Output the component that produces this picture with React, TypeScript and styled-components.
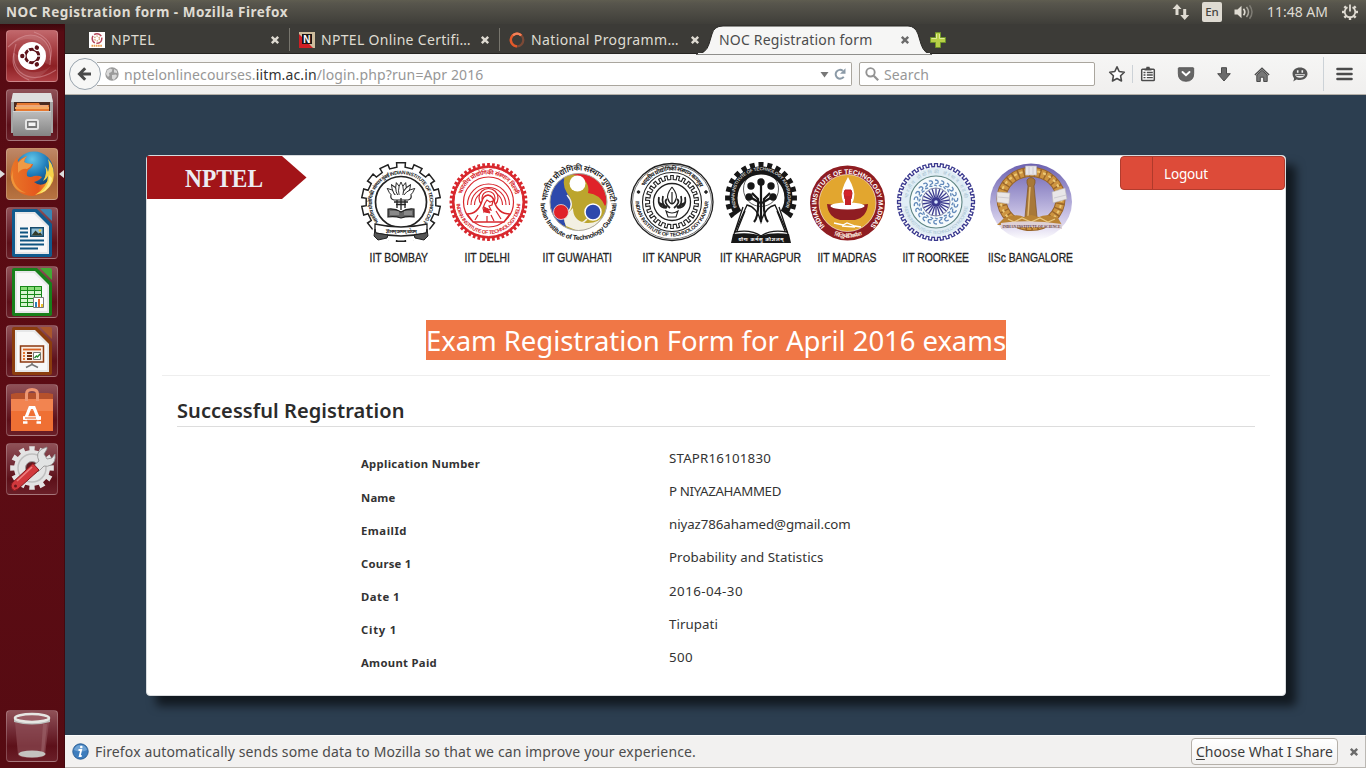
import React, { useLayoutEffect, useRef, useState } from "react";
import styled, { createGlobalStyle } from "styled-components";

const Global = createGlobalStyle`
  * { box-sizing: border-box; }
  html, body { margin: 0; padding: 0; }
  body { font-family: "Noto Sans", "Open Sans", sans-serif; font-size: 14px; overflow: hidden; }
  svg { display: block; flex: none; overflow: visible; }
`;

/* ---------- text tracked to a given measure ---------- */
const Span = styled.span<{ $track: number }>`
  display: inline-block;
  flex: none;
  white-space: nowrap;
  letter-spacing: ${(p) => p.$track}px;
`;

function Fit({ w, text, children }: { w: number; text: string; children?: React.ReactNode }) {
  const ref = useRef<HTMLSpanElement>(null);
  const [track, setTrack] = useState(0);
  useLayoutEffect(() => {
    if (ref.current) setTrack((w - ref.current.getBoundingClientRect().width) / text.length);
  }, []);
  return (
    <Span ref={ref} $track={track}>
      {children ?? text}
    </Span>
  );
}

/* ---------- shell ---------- */
const Desktop = styled.div`
  width: 1366px;
  height: 768px;
  display: flex;
  flex-direction: column;
  overflow: hidden;
`;
const TopPanel = styled.header`
  height: 24px;
  flex: none;
  display: flex;
  align-items: center;
  padding: 0 8px 0 6px;
  background: linear-gradient(#5f5d50 0, #58564d 3px, #3f3e39 100%);
  color: #dfdbd2;
`;
const WindowTitle = styled.div`
  flex: 1;
  font-weight: 700;
  font-size: 13.5px;
  line-height: 22px;
`;
const Indicators = styled.div`
  display: flex;
  align-items: center;
  height: 24px;
  line-height: 24px;
`;
const Gap = styled.span<{ $w: number }>`
  width: ${(p) => p.$w}px;
  flex: none;
`;
const LangBadge = styled.span`
  width: 20px;
  height: 20px;
  border-radius: 2px;
  background: #dfdbd2;
  color: #45433e;
  font-size: 11.5px;
  font-weight: 500;
  line-height: 20px;
  text-align: center;
`;
const Body = styled.div`
  flex: 1;
  display: flex;
  min-height: 0;
`;
const Launcher = styled.nav`
  width: 65px;
  flex: none;
  display: flex;
  flex-direction: column;
  gap: 7px;
  padding: 6px 0 6px 6px;
  background: linear-gradient(#3d070c 0, #570b13 8px, #5c0c14 60%, #560b12 100%);
  border-right: 1px solid #43090f;
`;
const Tile = styled.div<{ $tone?: string; $last?: boolean }>`
  position: relative;
  width: 52px;
  height: 52px;
  flex: none;
  margin-top: ${(p) => (p.$last ? "auto" : "0")};
  border-radius: 4px;
  border: 1px solid rgba(255, 255, 255, 0.22);
  background: ${(p) =>
    p.$tone ?? "linear-gradient(#8f5157 0, #75303a 35%, #5d1019 70%, #6a1f28 100%)"};
  svg { margin: -1px; }
`;
const Marker = styled.i<{ $right?: boolean }>`
  position: absolute;
  top: 21px;
  left: ${(p) => (p.$right ? "52px" : "-7px")};
  border: 4px solid transparent;
  ${(p) => (p.$right ? "border-right: 5px solid #ddd; border-left: 0;" : "border-left: 5px solid #ddd; border-right: 0;")}
`;

/* ---------- browser ---------- */
const Browser = styled.main`
  flex: 1;
  min-width: 0;
  display: flex;
  flex-direction: column;
`;
const TabStrip = styled.div`
  height: 30px;
  flex: none;
  display: flex;
  padding-left: 15px;
  background: #3c3b37;
  border-bottom: 1px solid #262522;
`;
const Tab = styled.div<{ $active?: boolean; $line?: boolean }>`
  position: relative;
  width: 210px;
  flex: none;
  display: flex;
  align-items: center;
  padding: 2px 10px 0 9px;
  line-height: 20px;
  color: ${(p) => (p.$active ? "#4c4c4c" : "#dfdbd2")};
  &::after {
    content: "";
    position: absolute;
    right: 0;
    top: 4px;
    width: 1px;
    height: 23px;
    background: ${(p) => (p.$line ? "#77756d" : "transparent")};
  }
`;
const TabShape = styled.svg`
  position: absolute;
  left: -14px;
  top: 1px;
`;
const TabLabel = styled.div`
  position: relative;
  flex: 1;
  display: flex;
  align-items: center;
  gap: 6px;
`;
const CloseWrap = styled.span`
  position: relative;
  flex: none;
`;
const Toolbar = styled.div`
  height: 41px;
  flex: none;
  display: flex;
  align-items: center;
  padding: 0 13px 0 4px;
  background: linear-gradient(#f6f6f5, #f0efee);
  border-bottom: 1px solid #b3afa8;
`;
const BackButton = styled.button`
  position: relative;
  width: 32px;
  height: 32px;
  flex: none;
  padding: 0;
  display: grid;
  place-items: center;
  border: 1px solid #98a3ad;
  border-radius: 50%;
  background: #f7f7f6;
`;
const Field = styled.div<{ $w: number; $joined?: boolean }>`
  width: ${(p) => p.$w}px;
  height: 24px;
  flex: none;
  display: flex;
  align-items: center;
  margin-left: ${(p) => (p.$joined ? "-4px" : "7px")};
  padding: 0 5px;
  padding-left: ${(p) => (p.$joined ? "8px" : "5px")};
  border: 1px solid #aaa69e;
  ${(p) => p.$joined && "border-left: 0;"}
  border-radius: ${(p) => (p.$joined ? "0 2px 2px 0" : "2px")};
  background: #fff;
  color: #979797;
  line-height: 20px;
  ${Span} { padding-top: 2px; }
  b { font-weight: 400; color: #333; }
`;
const Grow = styled.span`
  flex: 1;
`;
const ToolIcons = styled.div`
  flex: 1;
  display: flex;
  align-items: center;
  justify-content: flex-end;
`;
const Divider = styled.span<{ $h: number; $l: number; $r: number }>`
  width: 1px;
  height: ${(p) => p.$h}px;
  margin: 0 ${(p) => p.$r}px 0 ${(p) => p.$l}px;
  background: #ccd2d7;
`;

/* ---------- page ---------- */
const Viewport = styled.section`
  flex: 1;
  min-height: 0;
  padding: 60px 80px 0 81px;
  background: #2c3e50;
  overflow: hidden;
`;
const Card = styled.article`
  height: 541px;
  background: #fff;
  border: 1px solid #d8dbde;
  border-radius: 4px;
  box-shadow: 10px 10px 10px rgba(0, 0, 0, 0.6);
  color: #333;
`;
const CardHead = styled.div`
  display: flex;
  align-items: flex-start;
  height: 164px;
`;
const Logout = styled.button`
  width: 165px;
  height: 34px;
  flex: none;
  display: flex;
  padding: 0;
  margin-left: 34px;
  border: 1px solid #b13c2e;
  border-radius: 4px;
  background: #dd4b39;
  color: #fff;
  font: 13.5px/35px "Noto Sans", sans-serif;
  text-align: left;
`;
const LogoutIconCell = styled.span`
  width: 32px;
  height: 32px;
  margin-right: 11px;
  border-right: 1px solid #b03a2b;
`;
const Title = styled.h1`
  width: 580px;
  height: 40px;
  margin: 0 0 0 279px;
  background: #f07746;
  color: #fff;
  font-weight: 400;
  font-size: 27.5px;
  line-height: 41px;
  white-space: nowrap;
`;
const Rule = styled.hr`
  height: 1px;
  border: 0;
  margin: 15px 15px 0;
  background: #eee;
`;
const Heading = styled.h2`
  height: 51px;
  margin: 0 30px;
  padding-top: 20px;
  border-bottom: 1px solid #ddd;
  font-size: 20px;
  font-weight: 600;
  line-height: 29px;
  color: #2b2b2b;
`;
const Details = styled.dl`
  margin: 15px 0 0 214px;
`;
const Row = styled.div`
  display: grid;
  grid-template-columns: 308px 1fr;
  height: 33.2px;
`;
const Term = styled.dt`
  padding-top: 12.35px;
  font-weight: 700;
  font-size: 11.3px;
  line-height: 20px;
`;
const Value = styled.dd`
  margin: 0;
  padding-top: 5.85px;
  font-size: 13.3px;
  line-height: 20px;
`;
const Notice = styled.footer`
  height: 33px;
  flex: none;
  display: flex;
  align-items: center;
  padding: 0 6px 0 7px;
  background: #f2f1f0;
  border-top: 1px solid #fbfbfb;
  border-bottom: 1px solid #bbb8b3;
  border-right: 1px solid #bbb8b3;
  color: #4c4c4c;
`;
const ShareButton = styled.button`
  width: 147px;
  height: 27px;
  margin-right: 11px;
  padding: 0 0 0 4px;
  border: 1px solid #b5b0a9;
  border-radius: 4px;
  background: linear-gradient(#fff, #f3f2f1);
  color: #3c3c3c;
  font: 14px/24px "Noto Sans", sans-serif;
  text-align: left;
  u { text-underline-offset: 2px; }
`;

/* ---------- drawing helpers ---------- */
function gear(cx: number, cy: number, r1: number, r2: number, n: number, duty = 0.5) {
  const pts: string[] = [];
  const pt = (r: number, a: number) =>
    pts.push(`${(cx + r * Math.cos(a)).toFixed(2)},${(cy + r * Math.sin(a)).toFixed(2)}`);
  const step = (Math.PI * 2) / n;
  for (let i = 0; i < n; i++) {
    const mid = i * step - Math.PI / 2;
    const h = (step * duty) / 2;
    pt(r1, mid - h * 1.05);
    pt(r2, mid - h);
    pt(r2, mid + h);
    pt(r1, mid + h * 1.05);
  }
  return "M" + pts.join("L") + "Z";
}
const arcTop = (cx: number, cy: number, r: number) => `M${cx - r} ${cy}A${r} ${r} 0 0 1 ${cx + r} ${cy}`;
const arcBottom = (cx: number, cy: number, r: number) => `M${cx - r} ${cy}A${r} ${r} 0 0 0 ${cx + r} ${cy}`;
const ring = (n: number) => Array.from({ length: n }, (_, i) => (i * 360) / n);

function ArcText({ id, d, size, len, fill, offset = "50%", children, weight = 700 }: {
  id: string; d: string; size: number; len: number; fill: string; offset?: string; children: string; weight?: number;
}) {
  return (
    <>
      <path id={id} d={d} fill="none" />
      <text fontFamily="Liberation Sans, Noto Sans, sans-serif" fontSize={size} fontWeight={weight} fill={fill} textAnchor="middle">
        <textPath href={`#${id}`} startOffset={offset} textLength={len}>{children}</textPath>
      </text>
    </>
  );
}

const names: [string, number, number][] = [
  ["IIT BOMBAY", 369.5, 58.5], ["IIT DELHI", 464.5, 45.5], ["IIT GUWAHATI", 542.5, 69.5], ["IIT KANPUR", 642.5, 58.5],
  ["IIT KHARAGPUR", 720, 81], ["IIT MADRAS", 817.5, 59], ["IIT ROORKEE", 902.5, 66.5], ["IISc BANGALORE", 988, 85],
];

function Bombay() {
  const k = "#222";
  return (
    <g stroke={k} fill="none">
      <path d={gear(401, 202, 35, 39.5, 14, 0.5)} strokeWidth="1.5" fill="#fff" />
      <circle cx="401" cy="202" r="25.5" strokeWidth="1.7" />
      <path d="M374 226l-6 14 66 0-6-14z" fill="#fff" stroke="none" />
      <g stroke="none">
        <ArcText id="bo" d="M379 222A29 29 0 1 1 423 222" size={5} len={132} fill={k}>भारतीय प्रौद्योगिकी संस्थान मुंबई INDIAN INSTITUTE OF TECHNOLOGY</ArcText>
      </g>
      {[-50, -32, -15, 15, 32, 50, 0].map((a) => (
        <path key={a} transform={`rotate(${a} 401 200)`} d="M401 199q-5-8 0-17q5 9 0 17" strokeWidth=".9" fill="#fff" />
      ))}
      <path d="M391 195q-1 4 3 5h14q4-1 3-5" strokeWidth="1.2" fill="#fff" />
      <path d="M394 202h14M396 204.500h10M401 198v12M397 200v8M405 200v8" strokeWidth="1.300" />
      <path d="M388 209q7-1 13 3q6-4 13-3v8q-7-1-13 1q-6-2-13-1z" fill="#666" strokeWidth="1.200" />
      <path d="M390 212h9M390 214h9M404 212h8M404 214h8" stroke="#ddd" strokeWidth=".6" />
      <path d="M375 224q26 6 52 0v9q-26 6-52 0z" fill="#fff" strokeWidth="1.300" />
      <path d="M375 229l-1 7 4 4 9-2 1-3-12-2zM427 229l1 7-4 4-9-2-1-3 12-2z" fill="#555" />
      <text x="401" y="233" fontSize="5" stroke="none" fill={k} textAnchor="middle" fontWeight="700" textLength="31">ज्ञानम् परमम् ध्येयम्</text>
    </g>
  );
}
function Delhi() {
  const c = "#d8272d";
  return (
    <g fill="none" stroke={c}>
      <path d={gear(488.5, 202, 36.5, 39, 48, 0.55)} fill={c} stroke="none" />
      <circle cx="488.5" cy="202" r="34.5" fill="#fff" strokeWidth="1" />
      <circle cx="488.5" cy="202" r="25" strokeWidth="1.2" />
      {[21, 17.5, 14].map((r) => (
        <path key={r} d={`M${488.5 - r} 205A${r} ${r} 0 1 1 ${488.5 + r} 205`} strokeWidth="1.1" />
      ))}
      <circle cx="488.5" cy="198" r="9.5" fill="#fff" strokeWidth="1.200" />
      <circle cx="488.5" cy="198" r="6.5" strokeWidth="1.200" />
      <path d="M467 214q11 0 15-13q1-5 6-6q5 1 6 6q4 13 16 13l-6 8h-31z" fill="#fff" strokeWidth="1.500" />
      <path d="M485 203l2-3 3 2 3-1-1 4-3 1 2 4-4-1-3 3-1-4zM478 215l-3 5M496 211l5 8M487 216v6M491 215l3 6" strokeWidth="1.200" />
      <path d="M484 207l4 2 2 4-5-1z" fill={c} />
      <g stroke="none">
        <ArcText id="d1" d={arcTop(488.5, 202, 27.7)} size={6} len={72} fill={c}>भारतीय प्रौद्योगिकी संस्थान दिल्ली</ArcText>
        <ArcText id="d2" d={arcBottom(488.5, 202, 32)} size={5.2} len={97} fill={c}>INDIAN INSTITUTE OF TECHNOLOGY DELHI</ArcText>
      </g>
    </g>
  );
}
function Guwahati() {
  return (
    <g>
      <defs><clipPath id="gdisc"><circle cx="578.5" cy="202" r="28.5" /></clipPath></defs>
      <circle cx="578.5" cy="202" r="28.5" fill="#bca52d" />
      <g clipPath="url(#gdisc)">
        <path d="M571 174q22-5 32 14q6 13 2 18q-5-12-17-13q2-9-5-14q-6-4-12-5z" fill="#e02229" />
        <path d="M566 173q-20 9-17 33q4 17 17 21q-4-10 3-16q6-8-2-18q-6-9-1-20z" fill="#2d49ac" />
        <path d="M566 226q-5-10 3-14l4-4q0 13 13 15q12 1 19-9q-12 18-27 17z" fill="#f3f0e2" />
        <path d="M571 224q11 1 16-5M567 195q8 9 1 17" fill="none" stroke="#f3f0e2" strokeWidth="1.500" />
      </g>
      <circle cx="577.500" cy="183.500" r="8" fill="#fff" />
      <circle cx="561" cy="212" r="7.500" fill="#e02229" stroke="#e9dede" strokeWidth=".8" />
      <circle cx="593" cy="212" r="8" fill="#2d49ac" stroke="#fff" strokeWidth="1.500" />
      <circle cx="578.5" cy="202" r="28.5" fill="none" stroke="#a9a6a0" strokeWidth="1" />
      <ArcText id="g1" d={arcTop(578.5, 202, 31.5)} size={8} len={98} fill="#222" weight={600}>भारतीय प्रौद्योगिकी संस्थान गुवाहाटी</ArcText>
      <ArcText id="g2" d={arcBottom(578.5, 202, 38)} size={6.8} len={117} fill="#222">Indian Institute of Technology Guwahati</ArcText>
    </g>
  );
}
function Kanpur() {
  const k = "#222";
  return (
    <g fill="none" stroke={k}>
      <ellipse cx="672" cy="202" rx="41" ry="38.5" strokeWidth="1.3" />
      <ellipse cx="672" cy="202" rx="39.5" ry="37" strokeWidth=".6" />
      <circle cx="672" cy="202" r="29.5" strokeWidth="1.1" />
      <path d={gear(672, 202, 22.5, 26.5, 26, 0.42)} strokeWidth="1.1" />
      <circle cx="672" cy="202" r="18.5" strokeWidth="1.3" />
      <path d="M672 187q-6 8-4 12q1 4 4 5q3-1 4-5q2-4-4-12M672 192v12" strokeWidth="1.200" />
      <path d="M659 197q-2 10 7 11M663 196q-2 9 4 11M667 199q-4 3 3 9M685 197q2 10-7 11M681 196q2 9-4 11M677 199q4 3-3 9M660 203l7 5M684 203l-7 5" strokeWidth="1.700" />
      <path d="M666 211q6 4 12 0l-2 6h-8z" fill="#fff" strokeWidth="1.100" />
      <circle cx="638.500" cy="192" r="1.3" fill={k} /><circle cx="706" cy="192" r="1.3" fill={k} />
      <g stroke="none">
        <ArcText id="k1" d={arcTop(672, 202, 31.5)} size={6} len={68} fill={k}>भारतीय प्रौद्योगिकी संस्थान कानपुर</ArcText>
        <ArcText id="k2" d={arcBottom(672, 200, 36.5)} size={5.3} len={112} fill={k}>INDIAN INSTITUTE OF TECHNOLOGY KANPUR</ArcText>
      </g>
    </g>
  );
}
function Kharagpur() {
  const k = "#171717";
  return (
    <g>
      <path d={gear(761, 198, 31.5, 36, 24, 0.55)} fill={k} />
      <circle cx="761" cy="198" r="23.5" fill="#fff" />
      <ArcText id="kh" d="M740 213A26.500 26.500 0 1 1 782 213" size={4.6} len={104} fill="#ccc">INDIAN INSTITUTE OF TECHNOLOGY KHARAGPUR</ArcText>
      <circle cx="761" cy="189" r="17.500" fill="none" stroke={k} strokeWidth=".7" />
      <path d="M734 216l-9 18h72l-9-18-12-9h-30z" fill="#fff" />
      <path d="M747 205q10 2 14 17q4-15 14-17l12 27q-16-3-26 4q-10-7-26-4z" fill="#fff" stroke={k} strokeWidth="1.300" />
      <path d="M743 207l-9 27M779 207l9 27M745 211l-8 20M777 211l8 20" fill="none" stroke={k} strokeWidth="1.300" />
      <path d="M754 222q5-6 4-23l-6-6M768 222q-5-6-4-23l6-6M761 222v-38M760 203l-10-6M762 203l10-6" stroke={k} strokeWidth="2.200" fill="none" />
      {[[761, 182], [751, 186], [771, 186], [749, 197], [773, 197]].map(([x, y]) => (
        <circle key={`${x}-${y}`} cx={x} cy={y} r="3.7" fill={k} />
      ))}
      <path d="M733 234q18-2 28 2q10-4 28-2l2 9h-60z" fill={k} />
      <text x="761" y="240.5" fontSize="5" fill="#fff" textAnchor="middle" fontWeight="700" textLength="45">योगः कर्मसु कौशलम्</text>
    </g>
  );
}
function Madras() {
  return (
    <g>
      <circle cx="847.5" cy="203" r="37.5" fill="#8f1d22" />
      <circle cx="847.5" cy="203" r="28.5" fill="#e2a62f" stroke="#fff" strokeWidth=".6" />
      <ArcText id="m1" d="M828 229A31 31 0 1 1 867 229" size={6.6} len={144} fill="#fff">INDIAN INSTITUTE OF TECHNOLOGY MADRAS</ArcText>
      <path d="M848 177q-8 14-6 21q1 6 6 7q5-1 6-7q2-7-6-21z" fill="#fff" />
      <path d="M845 190h6l1 3-1 6h-6l-1-6zM847 199v6M849.5 199v6" fill="#d3242a" stroke="#b81d23" />
      <path d="M827 204q20 3 41 0q-1 13-13 16h-15q-12-3-13-16z" fill="#8f1d22" />
      <ellipse cx="847.5" cy="206" rx="17" ry="3.5" fill="#fff" />
      <path d="M845 196h6v9h-6z" fill="#c3232a" />
      <path d="M834 223l9 2 4-2 8 3 6 1M842 226l13 1" stroke="#fff" strokeWidth="1.300" fill="none" />
      <ArcText id="m2" d={arcBottom(847.5, 203, 35)} size={5.5} len={29} fill="#f3dfd0">सिद्धिर्भवति कर्मजा</ArcText>
    </g>
  );
}
function Roorkee() {
  const b = "#3b3a8f";
  return (
    <g fill="none">
      <circle cx="936" cy="202" r="34.5" fill="#e0edf5" />
      <path d={gear(936, 202, 35.5, 38.5, 40, 0.5)} stroke={b} strokeWidth="1.3" />
      <ArcText id="r1" d={arcTop(936, 202, 28.5)} size={5} len={82} fill="#a5bfd0" weight={400}>भारतीय प्रौद्योगिकी संस्थान रुड़की</ArcText>
      <ArcText id="r2" d={arcBottom(936, 202, 32)} size={4.5} len={92} fill="#a5bfd0" weight={400}>INDIAN INSTITUTE OF TECHNOLOGY ROORKEE</ArcText>
      <circle cx="936" cy="202" r="26" fill="#f5fafc" stroke="#5d8481" strokeWidth="1.1" />
      {ring(22).map((a) => (
        <g key={a} transform={`rotate(${a} 936 202)`}>
          <path d="M935 180q4 0 3 3l-3 1M937 186l-3-1" stroke="#6289ba" strokeWidth="1.300" />
          <path d="M936 197v-9" stroke={b} strokeWidth="1.300" />
        </g>
      ))}
      <circle cx="936" cy="202" r="14" stroke="#8287a7" strokeWidth="1" />
      <circle cx="936" cy="202" r="5" fill={b} /><circle cx="936" cy="202" r="1.8" fill="#dce9ff" />
    </g>
  );
}
function Bangalore() {
  return (
    <g>
      <defs>
        <linearGradient id="sky" x1="0" y1="0" x2="0" y2="1">
          <stop offset="0" stopColor="#6c61b0" /><stop offset=".45" stopColor="#a9a2d4" /><stop offset=".8" stopColor="#ddd7ef" /><stop offset="1" stopColor="#fff" />
        </linearGradient>
      </defs>
      <ellipse cx="1031" cy="202" rx="41" ry="38.500" fill="url(#sky)" />
      <ellipse cx="1031" cy="199" rx="29.500" ry="27" fill="none" stroke="#99652a" strokeWidth="10" />
      <ellipse cx="1031" cy="199" rx="29.500" ry="27" fill="none" stroke="#cd9440" strokeWidth="8" strokeDasharray="4 1.500" />
      <ellipse cx="1031" cy="199" rx="30.500" ry="28" fill="none" stroke="#ecc977" strokeWidth="2" strokeDasharray="3 3" />
      <path d="M1025.500 166h11v9h-11zM997 192l13 1-1 11-12-2zM1052 192l13-4 2 11-14 4z" fill="#e9e6e8" stroke="#b8b3b8" strokeWidth=".6" />
      <path d="M998 197l11 1M1054 198l12-3M1029 167v7M1033 167v7" stroke="#c8c4cc" strokeWidth=".8" />
      <path d="M1027 180q4-5 8 0v3l-1 3 3 31h-12l3-31-1-3z" fill="#a87838" stroke="#805421" strokeWidth=".7" />
      <path d="M1030 187l-2 29" stroke="#e1b873" strokeWidth="1.500" />
      <path d="M1004 218q13-5 20-1l7-2 8 2q8-4 19 1l4 7h-65z" fill="#b98334" />
      <path d="M1008 219l6 3 8-4 9 4 9-4 8 4 7-3" stroke="#e8c67d" strokeWidth="1.300" fill="none" />
      <path d="M1001 223q29-4 61 1v5q-31-4-61 0z" fill="#ded0d5" />
      <text x="1031.500" y="228" fontSize="4.500" fill="#5f3d48" textAnchor="middle" fontWeight="700" textLength="58" lengthAdjust="spacingAndGlyphs" fontFamily="Liberation Serif, serif">INDIAN INSTITUTE OF SCIENCE</text>
    </g>
  );
}
function Institutes() {
  return (
    <svg width="726" height="120" viewBox="360 156 726 120" fontFamily="Liberation Sans, Noto Sans, sans-serif">
      <Bombay /><Delhi /><Guwahati /><Kanpur /><Kharagpur /><Madras /><Roorkee /><Bangalore />
      {names.map(([t, x, w]) => (
        <text key={t} x={x} y="261.800" fontSize="13" fill="#222" stroke="#222" strokeWidth=".3" textLength={w} lengthAdjust="spacingAndGlyphs">{t}</text>
      ))}
    </svg>
  );
}
const FlagSlot = styled.div`
  width: 213px;
  flex: none;
`;
function Flag() {
  return (
    <svg width="160" height="43" viewBox="0 0 160 43">
      <path d="M0 0H135L159.500 21.500 135 43H0Z" fill="#a21418" />
      <text x="38" y="30.500" fontFamily="Liberation Serif, serif" fontSize="24.500" fontWeight="700" fill="#ececf2" textLength="78" lengthAdjust="spacingAndGlyphs">NPTEL</text>
    </svg>
  );
}

/* ---------- chrome icons ---------- */
const Close = ({ c }: { c: string }) => (
  <svg width="10" height="10" viewBox="0 0 10 10"><path d="M1.800 1.800l6.400 6.400M8.200 1.800l-6.400 6.400" stroke={c} strokeWidth="2.400" /></svg>
);
const NptelFavicon = () => (
  <svg width="16" height="16" viewBox="0 0 16 16">
    <path fill="#fff" d="M0 0h16v16H0z" /><circle cx="8" cy="6.500" r="4.800" fill="none" stroke="#b5485a" strokeWidth="1.500" strokeDasharray="8 1.500" />
    <circle cx="8" cy="6.500" r="2.400" fill="none" stroke="#d4a275" strokeWidth="1.300" strokeDasharray="1.400 1" /><path d="M2.500 13.800h11" stroke="#e89c4c" strokeWidth="2" strokeDasharray="1.600 .6" />
  </svg>
);
const NFavicon = () => (
  <svg width="16" height="16" viewBox="0 0 16 16">
    <path fill="#cdbc9c" d="M0 0h16v16H0z" /><path fill="#cf1e24" d="M0 2l14 14H0z" /><path fill="#1b1414" d="M3 2h10v10H3z" />
    <text x="7.800" y="11" fill="#fff" fontSize="10" fontWeight="700" textAnchor="middle" fontFamily="Liberation Sans, sans-serif">N</text>
  </svg>
);
const Spinner = () => (
  <svg width="16" height="16" viewBox="0 0 16 16" fill="none" strokeWidth="2.300">
    <circle cx="8" cy="8" r="6.300" stroke="#7b4936" /><path d="M12.500 3.500A6.300 6.300 0 1 0 8 14.300" stroke="#e2592a" />
    <path d="M4 3.300A6.300 6.300 0 0 1 12 3.300" stroke="#f2835c" />
  </svg>
);
const Plus = styled.svg`
  margin: 8px 0 0 10px;
`;
const PLUS = "M5.500 .5h5v5h5v5h-5v5h-5v-5h-5v-5h5z";

const ic = "#4b4b4b";
const Star = () => (
  <svg width="18" height="18" viewBox="0 0 18 18"><path d="M9 1.800l2.200 4.700 5.100.7-3.700 3.600.9 5.200L9 13.500 4.500 16l.9-5.200L1.700 7.200l5.100-.7z" fill="#fff" stroke={ic} strokeWidth="1.600" strokeLinejoin="round" /></svg>
);
const Clipboard = () => (
  <svg width="14" height="16" viewBox="0 0 14 16"><path d="M1.500 3.200h11q.8 0 .8.8v9.700q0 .8-.8.8h-11q-.8 0-.8-.8V4q0-.8.8-.8z" fill="#fff" stroke={ic} strokeWidth="1.500" /><path d="M3.500 4.500V2.700H5L5.500.8h3L9 2.700h1.500v1.800z" fill={ic} /><path d="M2.500 6.500h2M5.800 6.500h6M2.500 9h2M5.800 9h6M2.500 11.600h2M5.800 11.600h6" stroke={ic} strokeWidth="1.400" /></svg>
);
const Pocket = () => (
  <svg width="16" height="15" viewBox="0 0 16 15"><path d="M1 .7h14q.7 0 .7.700v5.200q0 7.700-7.700 7.700T.3 6.600V1.400Q.3.700 1 .700z" fill="#666" stroke={ic} strokeWidth=".8" /><path d="M4.500 5l3.500 3.300L11.500 5" fill="none" stroke="#fff" strokeWidth="1.900" strokeLinecap="round" /></svg>
);
const Download = () => (
  <svg width="14" height="15" viewBox="0 0 14 15"><path d="M4.500.7h5v6h3.800L7 14 .7 6.700h3.800z" fill="#6b6b6b" stroke={ic} strokeWidth="1" /></svg>
);
const Home = () => (
  <svg width="16" height="15" viewBox="0 0 16 15"><path d="M2.800 8L8 3.300l5.200 4.700V14.500H9.700v-4.300H6.300v4.300H2.800z" fill="#777" stroke={ic} /><path d="M.9 8L8 1.300l7.100 6.700" fill="none" stroke={ic} strokeWidth="1.500" /></svg>
);
const Chat = () => (
  <svg width="16" height="15" viewBox="0 0 16 15"><path d="M8 .5c4.200 0 7.500 2.700 7.500 6.300S12.200 13 8 13c-1.300 0-2.400-.2-3.400-.6L1 14.500q1.200-1.500 1-3.200Q.5 9.500.5 6.800C.5 3.200 3.800.5 8 .5z" fill="#555" /><path d="M5.700 3.200v2.500M10.300 3.200v2.500" stroke="#eee" strokeWidth="1.600" /><path d="M3 7.200h10q-1 3.500-5 3.500T3 7.200z" fill="#eee" /><path d="M4.300 8.500h7.400" stroke="#666" /></svg>
);
const Menu = () => (
  <svg width="17" height="14" viewBox="0 0 17 14"><path d="M1.500 2h14M1.500 7h14M1.500 12h14" stroke={ic} strokeWidth="2.600" strokeLinecap="round" /></svg>
);
const BackArrow = () => (
  <svg width="16" height="16" viewBox="0 0 16 16"><path d="M14 8H3.500M8.200 2.300L2.500 8l5.700 5.700" fill="none" stroke="#4a4a4a" strokeWidth="3" /></svg>
);
const Globe = () => (
  <svg width="14" height="14" viewBox="0 0 14 14"><circle cx="7" cy="7" r="6.700" fill="#9b9b9b" /><path d="M2 3.500l3-2 2.500 1-1 2.500-2.500 1 .5 2.500L3 10 1 7zM9 2l3 2v2l-3-.5zM7 8l4-.5 1 1.500-3 4-2-1.500z" fill="#d9d9d9" /></svg>
);
const Reload = () => (
  <svg width="12" height="12" viewBox="0 0 12 12"><path d="M9.700 8.700A4.400 4.400 0 1 1 8.800 2.800" fill="none" stroke="#8b9aa7" strokeWidth="2" /><path d="M11.500.3v5.500H6z" fill="#8b9aa7" /></svg>
);
const Magnifier = () => (
  <svg width="14" height="14" viewBox="0 0 14 14" fill="none" stroke="#939393"><circle cx="5.500" cy="5.300" r="4.200" strokeWidth="1.900" /><path d="M8.700 8.700l4.500 4.600" strokeWidth="2.300" /></svg>
);
const p = "#dfdbd2";
const NetArrows = () => (
  <svg width="18" height="16" viewBox="0 0 18 16"><path d="M5 0l4.500 5H6.500v6h-3V5H.5zM12.700 16l-4.500-5h3V5h3v6h3z" fill={p} /></svg>
);
const Speaker = () => (
  <svg width="20" height="16" viewBox="0 0 20 16"><path d="M.5 5.500h3l4-3.700v12.400l-4-3.700h-3z" fill={p} /><path d="M9.500 4.700q2.600 3.300 0 6.600" stroke={p} strokeWidth="1.700" fill="none" /><path d="M12.500 3q4 5 0 10" stroke="#aaa79e" strokeWidth="1.500" fill="none" /><path d="M15.500 1.200q5 6.800 0 13.600" stroke="#7e7c74" strokeWidth="1.500" fill="none" /></svg>
);
const PowerGear = () => (
  <svg width="16" height="16" viewBox="0 0 16 16">
    {ring(8).slice(1).map((a) => <path key={a} transform={`rotate(${a} 8 8)`} d="M8 0v3" stroke={p} strokeWidth="2.400" />)}
    <path d="M5.500 3.300A5.300 5.300 0 1 0 10.500 3.300" stroke={p} strokeWidth="1.800" fill="none" /><path d="M8 .5v7" stroke={p} strokeWidth="1.800" />
  </svg>
);
const Info = () => (
  <svg width="17" height="17" viewBox="0 0 17 17"><circle cx="8.500" cy="8.500" r="7.700" fill="#3e7dbd" stroke="#2b5f96" /><path d="M2 7a6.700 6.700 0 0 1 13 0q-6 3-13 0" fill="#6ea2d4" /><path d="M6.500 7h2.700l-1.500 6h2" fill="none" stroke="#fff" strokeWidth="1.800" /><circle cx="9.300" cy="4" r="1.300" fill="#fff" /></svg>
);

/* ---------- launcher icons ---------- */
const Dash = () => (
  <svg width="52" height="52" viewBox="0 0 52 52">
    <path d="M2 17Q20-1 35 8q12 8 9 27l-5-2Q42 8 20 9Q10 10 2 17zM23 51Q3 42 8 23l5 3q0 14 12 16q12 1 20-6Q36 48 23 51z" fill="#fff" fillOpacity=".1" />
    <g fill="none" stroke="#e0a0a5" strokeOpacity=".5" strokeWidth="1.100"><path d="M2 17Q20-1 35 8q12 8 9 27" /><path d="M50 40Q28 54 14 42Q4 32 10 14" /><path d="M23 50Q3 42 8 23M28 2q22 8 16 28" /></g>
    <circle cx="26" cy="26" r="14" fill="#fff" />
    <circle cx="26" cy="26" r="6.800" fill="none" stroke="#5c1219" strokeWidth="3" />
    {[60, 180, 300].map((a) => (
      <g key={a} transform={`rotate(${a} 26 26)`}><circle cx="35.700" cy="26" r="3.400" fill="#fff" /><circle cx="35.700" cy="26" r="2.200" fill="#5c1219" /></g>
    ))}
    {[0, 120, 240].map((a) => <path key={a} transform={`rotate(${a} 26 26)`} d="M30 26h5" stroke="#fff" strokeWidth="1.300" />)}
  </svg>
);
const Files = () => (
  <svg width="52" height="52" viewBox="0 0 52 52">
    <defs><linearGradient id="cab" x1="0" y1="0" x2="0" y2="1"><stop offset="0" stopColor="#bdbdbd" /><stop offset="1" stopColor="#848484" /></linearGradient></defs>
    <path d="M7 4h38l2 10v30H5V14z" fill="#a5a5a5" /><path d="M7 4h38l2 9H5z" fill="#dedede" /><path d="M8 13h36v10H8z" fill="#4c2b20" />
    <path d="M11 14h22l1 2h9v8H9z" fill="#e67931" /><path d="M10 17h32" stroke="#fff" strokeOpacity=".7" /><path d="M9 19h34" stroke="#f6ab61" strokeWidth="2" />
    <path d="M7 22h38v24q0 1-1 1H8q-1 0-1-1z" fill="url(#cab)" /><path d="M7 22.500h38" stroke="#d4d4d4" />
    <rect x="20" y="31" width="12" height="9" rx="1.500" fill="#777" stroke="#e5e5e5" strokeWidth="2" /><path d="M22.500 33.500h7v3.500h-7z" fill="#f5f5f5" />
  </svg>
);
const Firefox = () => (
  <svg width="52" height="52" viewBox="0 0 52 52">
    <defs>
      <radialGradient id="fb" cx=".45" cy=".2" r=".8"><stop offset="0" stopColor="#5fc4e8" /><stop offset=".5" stopColor="#1d79b8" /><stop offset="1" stopColor="#10345f" /></radialGradient>
      <linearGradient id="ff" x1="0" x2="1"><stop offset="0" stopColor="#e97628" /><stop offset=".65" stopColor="#e4571d" /><stop offset="1" stopColor="#f7b33c" /></linearGradient>
    </defs>
    <circle cx="28" cy="23" r="19.500" fill="url(#fb)" />
    <path d="M46 19q3 10-2 18q-6 10-18 11Q9 47 5 31Q3 20 11 9l1 5q3-4 9-6q-3 3-3 7q3 1 9 1q-1 4-5 6q-2 3-1 6q3 2 7 0q4-1 8 1q-3 4-8 5q6 5 12 1q6-5 6-16z" fill="url(#ff)" />
    <path d="M42 11q8 9 5 22q-5 12-18 14q13-8 13-19q-2 4-5 5q5-8 2-15q2 2 3 6q2-6 0-13z" fill="#f6d24a" /><path d="M43 27q1 12-9 18q12-4 12-15z" fill="#fbe98c" />
    <path d="M7 22q-2 17 13 23q-14-2-15-16z" fill="#f09439" />
    <path d="M12 15q3-4 9-7q-3 3-3 6q3 2 8 2q-1 3-5 5q-5-1-9 4z" fill="#f09a45" />
  </svg>
);
const DocFrame = ({ c, light, children }: { c: string; light: string; children: React.ReactNode }) => (
  <svg width="52" height="52" viewBox="0 0 52 52">
    <path d="M8 2h23l15 15v31q0 2-2 2H8q-2 0-2-2V4q0-2 2-2z" fill={c} /><path d="M9 5h20l14 14v28H9z" fill="#e6e7e8" /><path d="M11 7h17l13 13v25H11z" fill="#f8f8f8" />
    <path d="M34 2h10q2 0 2 2v10z" fill={light} />{children}
  </svg>
);
const Writer = () => (
  <DocFrame c="#105b8e" light="#3b86b3"><path d="M14 21.500h8M14 25.500h8M14 29.500h8M14 33.500h24M14 37.500h24M14 41.500h18" stroke="#0f5480" strokeWidth="2" /><path d="M24 20h14v10H24z" fill="#174c6c" /><path d="M25.500 21.500h11v7h-11z" fill="#8fbfd7" /><path d="M25.500 28.500l4-5 3 3 2-1 2 3z" fill="#333d2b" /><circle cx="34" cy="23.500" r="1.300" fill="#efc93b" /></DocFrame>
);
const Calc = () => (
  <DocFrame c="#18801a" light="#43a935"><path d="M14 20h22v21H14z" fill="#188819" />{[0, 1, 2].map((x) => [0, 1, 2, 3, 4].map((y) => <path key={`${x}${y}`} d={`M${15 + x * 7} ${21 + y * 4}h6v3h-6z`} fill={y ? "#d8f4d0" : "#8add78"} />))}<path d="M27.500 31.500h10v10h-10z" fill="#fff" stroke="#777" /><path d="M29 36h2v5h-2z" fill="#2980b9" /><path d="M32 33h2v8h-2z" fill="#e0672a" /><path d="M35 38h2v3h-2z" fill="#ecc32b" /></DocFrame>
);
const Impress = () => (
  <DocFrame c="#8b3d0e" light="#a9572c"><path d="M14.500 21h23v16h-23z" fill="#f9ede2" stroke="#8c3910" strokeWidth="1.500" /><path d="M17 24.500h18" stroke="#d76124" strokeWidth="1.800" /><path d="M17 28h2M17 31h2M17 34h2" stroke="#e4762f" strokeWidth="2" /><path d="M21 28h5M21 31h5M21 34h5" stroke="#702e10" strokeWidth="2" /><path d="M27.500 27.500h7v7h-7z" fill="#fff" stroke="#777" /><path d="M28.500 33l2-2 1 1 2.500-3" stroke="#23882d" fill="none" strokeWidth="1.400" /><path d="M26 37.500v2l-6 3M26 39.500l6 3" stroke="#777" fill="none" strokeWidth="1.600" /></DocFrame>
);
const Bag = () => (
  <svg width="52" height="52" viewBox="0 0 52 52">
    <path d="M5 10l5-1h32l5 1v5H5z" fill="#b5512c" /><path d="M5 15h42v32H5z" fill="#ef7034" /><path d="M5 15h42v12H5z" fill="#f28450" />
    <path d="M20.500 17V10q0-4.500 5.500-4.500T31.500 10v7" fill="none" stroke="#ee9773" strokeWidth="3" />
    <path d="M19 36l5-12.500h4L33 36" fill="none" stroke="#fff" strokeWidth="3.200" /><path d="M17 34h18" stroke="#fff" strokeWidth="3.600" /><path d="M19 34h11" stroke="#ef7034" strokeWidth="1.200" /><path d="M17 38.500h4.500M30.500 38.500h4.500" stroke="#fff" strokeWidth="2.400" />
  </svg>
);
const Settings = () => (
  <svg width="52" height="52" viewBox="0 0 52 52">
    <path d={gear(26, 25, 18, 22, 12, 0.5)} fill="#e3e3e3" /><circle cx="26" cy="25" r="14" fill="none" stroke="#bfbfbf" strokeWidth="1.500" /><circle cx="26" cy="25" r="6.500" fill="#631a22" stroke="#999" />
    <path d="M27 23l6-5q-4-8 3-12l5-2 0 2-3 5 3 5 5-1 3-4q1 8-4 11-4 2-7 1l-6 6z" fill="#e2e4e4" stroke="#8d8d8d" strokeWidth=".8" />
    <path d="M27 20.500L6 40q-2 3 0 6t6 0l21-19z" fill="#d1383c" stroke="#84161b" /><path d="M26 24L11 38" stroke="#ed8080" strokeWidth="1.700" /><circle cx="9.500" cy="43" r="1.500" fill="#69181c" />
  </svg>
);
const Trash = () => (
  <svg width="52" height="52" viewBox="0 0 52 52">
    <path d="M9 12h34l-4 33q-1 3-13 3t-14-3z" fill="#92535b" fillOpacity=".6" /><path d="M37 14h4l-3 29h-3z" fill="#a26a70" fillOpacity=".5" /><ellipse cx="26" cy="44" rx="13.500" ry="3.500" fill="#c4c3bf" />
    <path d="M8 8.500q18 6 36 0v3.500q-18 5-36 0z" fill="#bbbcba" /><ellipse cx="26" cy="8" rx="17" ry="4" fill="#9a5d64" stroke="#e6e7e3" strokeWidth="2.600" />
  </svg>
);

const details: [string, number, string, number][] = [
  ["Application Number", 119, "STAPR16101830", 102],
  ["Name", 34.5, "P NIYAZAHAMMED", 112],
  ["EmailId", 46, "niyaz786ahamed@gmail.com", 181.500],
  ["Course 1", 50.5, "Probability and Statistics", 154.500],
  ["Date 1", 39, "2016-04-30", 74],
  ["City 1", 36, "Tirupati", 49],
  ["Amount Paid", 76, "500", 24],
];

export default function App() {
  return (
    <Desktop>
      <Global />
      <TopPanel>
        <WindowTitle><Fit w={282} text="NOC Registration form - Mozilla Firefox" /></WindowTitle>
        <Indicators>
          <NetArrows /><Gap $w={12} /><LangBadge>En</LangBadge><Gap $w={12} /><Speaker /><Gap $w={13} />
          <Fit w={61} text="11:48 AM" /><Gap $w={14} /><PowerGear />
        </Indicators>
      </TopPanel>
      <Body>
        <Launcher>
          <Tile $tone="linear-gradient(#c1676b 0, #a33a3e 40%, #8d2024 70%, #ad3e43)"><Dash /></Tile>
          <Tile><Files /></Tile>
          <Tile $tone="linear-gradient(#bf8867, #a66133 60%, #b87442)"><Firefox /><Marker /><Marker $right /></Tile>
          <Tile><Writer /></Tile>
          <Tile><Calc /></Tile>
          <Tile><Impress /></Tile>
          <Tile><Bag /></Tile>
          <Tile><Settings /></Tile>
          <Tile $last><Trash /></Tile>
        </Launcher>
        <Browser>
          <TabStrip>
            <Tab $line><TabLabel><NptelFavicon /><Fit w={44} text="NPTEL" /></TabLabel><Close c="#dfdbd2" /></Tab>
            <Tab $line><TabLabel><NFavicon /><Fit w={150} text="NPTEL Online Certifi…" /></TabLabel><Close c="#dfdbd2" /></Tab>
            <Tab><TabLabel><Spinner /><Fit w={148} text="National Programm…" /></TabLabel><Close c="#dfdbd2" /></Tab>
            <Tab $active>
              <TabShape width="236" height="29" viewBox="0 0 236 29">
                <path d="M0 29Q10 29 13 19L16 9Q18 1 27 1H212Q219 1 222 9L225 19Q228 29 236 29Z" fill="#f6f6f5" stroke="#292825" strokeWidth="1" />
                <path d="M2 28.500h232" stroke="#f6f6f5" />
              </TabShape>
              <TabLabel><Fit w={153.500} text="NOC Registration form" /></TabLabel>
              <CloseWrap><Close c="#6b6b6b" /></CloseWrap>
            </Tab>
            <Plus width="16" height="16" viewBox="0 0 16 16"><path d={PLUS} fill="#b7cf46" stroke="#6f9429" /><path d="M6.500 2v4.500h-5M9.500 2v4.500h5" stroke="#e0ec98" fill="none" /></Plus>
          </TabStrip>
          <Toolbar>
            <BackButton><BackArrow /></BackButton>
            <Field $w={755} $joined>
              <Globe /><Gap $w={5} />
              <Fit w={359.500} text="nptelonlinecourses.iitm.ac.in/login.php?run=Apr 2016">nptelonlinecourses.<b>iitm.ac.in</b>/login.php?run=Apr 2016</Fit>
              <Grow />
              <svg width="9" height="7" viewBox="0 0 9 7"><path d="M.5 1h8l-4 5.500z" fill="#777" /></svg>
              <Gap $w={5} /><Reload />
            </Field>
            <Field $w={236}><Magnifier /><Gap $w={5} /><Fit w={45} text="Search" /></Field>
            <ToolIcons>
              <Star /><Divider $h={18} $l={6} $r={8} /><Clipboard /><Gap $w={23} /><Pocket /><Gap $w={23} /><Download />
              <Gap $w={23} /><Home /><Gap $w={22} /><Chat /><Divider $h={34} $l={15} $r={12} /><Menu />
            </ToolIcons>
          </Toolbar>
          <Viewport>
            <Card>
              <CardHead>
                <FlagSlot><Flag /></FlagSlot>
                <Institutes />
                <Logout><LogoutIconCell /><Fit w={44} text="Logout" /></Logout>
              </CardHead>
              <Title><Fit w={580} text="Exam Registration Form for April 2016 exams" /></Title>
              <Rule />
              <Heading><Fit w={227.500} text="Successful Registration" /></Heading>
              <Details>
                {details.map(([k, kw, v, vw]) => (
                  <Row key={k}><Term><Fit w={kw} text={k} /></Term><Value><Fit w={vw} text={v} /></Value></Row>
                ))}
              </Details>
            </Card>
          </Viewport>
          <Notice>
            <Info /><Gap $w={6} />
            <Fit w={601} text="Firefox automatically sends some data to Mozilla so that we can improve your experience." />
            <Grow />
            <ShareButton><Fit w={137} text="Choose What I Share"><u>C</u>hoose What I Share</Fit></ShareButton>
            <Close c="#6b6b6b" />
          </Notice>
        </Browser>
      </Body>
    </Desktop>
  );
}
